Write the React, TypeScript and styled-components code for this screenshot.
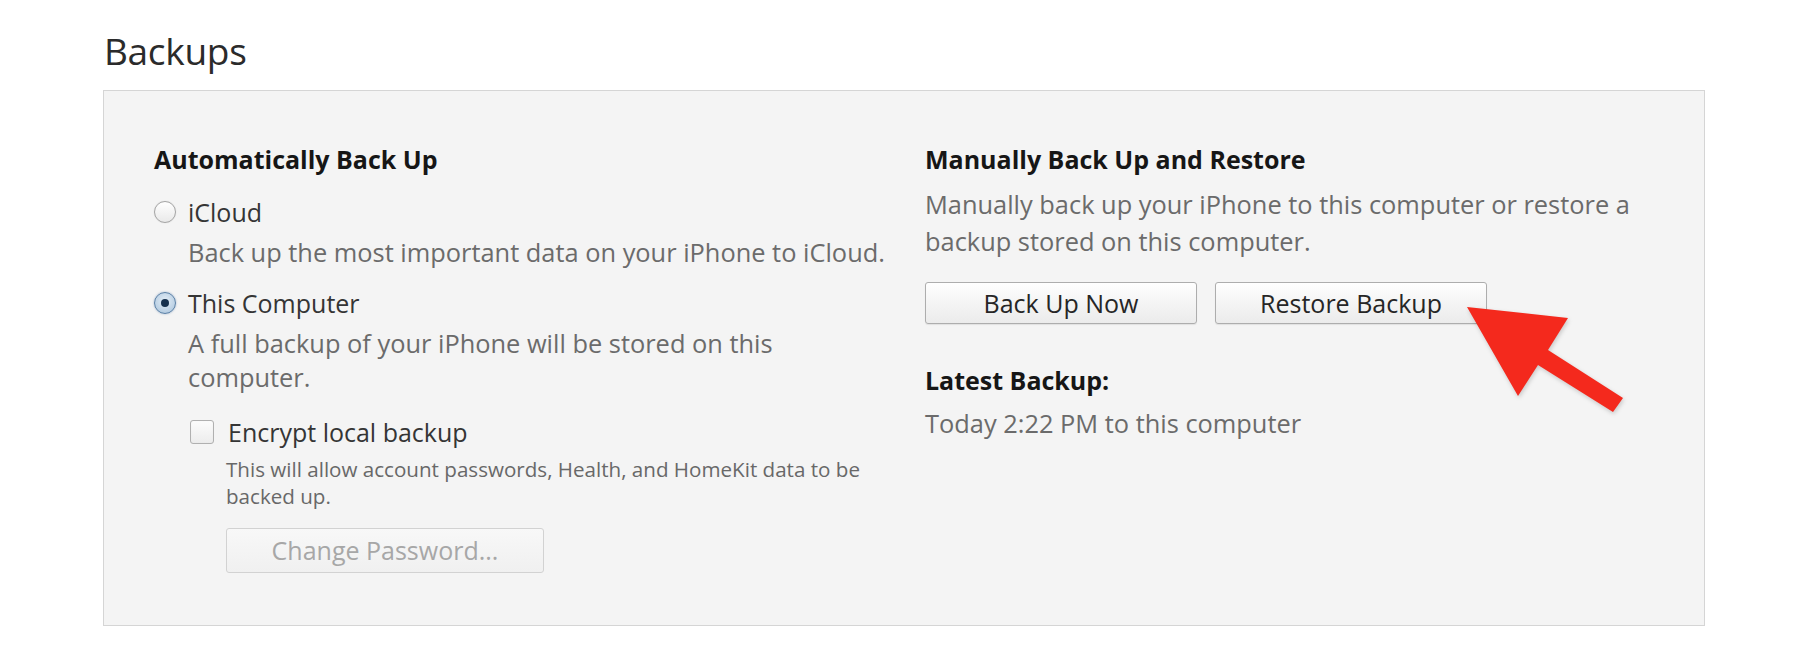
import styled, { createGlobalStyle } from 'styled-components'

const GlobalStyle = createGlobalStyle`
  html, body {
    margin: 0;
    padding: 0;
    background: #ffffff;
  }
  body {
    font-family: 'Open Sans', 'Noto Sans', sans-serif;
  }
`

export default function App() {
  return (
    <Page>
      <GlobalStyle />
      <Title>Backups</Title>
      <Panel>
        <Column>
          <Heading>Automatically Back Up</Heading>
          <OptionRow $top={21}>
            <Radio $checked={false} />
            <Label>iCloud</Label>
          </OptionRow>
          <Description $top={8} $lineHeight={33} $indent={34}>
            Back up the most important data on your iPhone to iCloud.
          </Description>
          <OptionRow $top={18}>
            <Radio $checked />
            <Label>This Computer</Label>
          </OptionRow>
          <Description $top={8} $lineHeight={33.5} $indent={34}>
            A full backup of your iPhone will be stored on this
            <br />
            computer.
          </Description>
          <CheckRow>
            <Checkbox />
            <Label>Encrypt local backup</Label>
          </CheckRow>
          <Nested>
            <SmallText>
              This will allow account passwords, Health, and HomeKit data to be
              <br />
              backed up.
            </SmallText>
            <PasswordButton disabled>Change Password...</PasswordButton>
          </Nested>
        </Column>
        <Column>
          <Heading>Manually Back Up and Restore</Heading>
          <Description $top={11} $lineHeight={36.5} $indent={0}>
            Manually back up your iPhone to this computer or restore a
            <br />
            backup stored on this computer.
          </Description>
          <ButtonRow>
            <Button>Back Up Now</Button>
            <Button>Restore Backup</Button>
          </ButtonRow>
          <Heading $top={40}>Latest Backup:</Heading>
          <Description $top={11} $lineHeight={32} $indent={0}>
            Today 2:22 PM to this computer
          </Description>
        </Column>
        <Arrow viewBox="0 0 180 125" width={180} height={125}>
          <polygon
            points="12,12 113,23 93,55 168,103 158,117 83,70 63,101"
            fill="#f4291d"
          />
        </Arrow>
      </Panel>
    </Page>
  )
}

const Page = styled.div`
  padding: 26px 0 40px 103px;
`

const Title = styled.h1`
  margin: 0 0 14px 1px;
  font-size: 37px;
  font-weight: 400;
  letter-spacing: -0.3px;
  line-height: 50px;
  color: #2b2b2b;
`

const Panel = styled.div`
  position: relative;
  box-sizing: border-box;
  width: 1602px;
  background: #f4f4f4;
  border: 1px solid #d5d5d5;
  padding: 52px 0 52px 50px;
  display: grid;
  grid-template-columns: 771px 1fr;
`

const Column = styled.div`
  display: flex;
  flex-direction: column;
  align-items: flex-start;
`

const Heading = styled.div<{ $top?: number }>`
  margin-top: ${({ $top }) => $top ?? 0}px;
  font-size: 25px;
  font-weight: 700;
  line-height: 32px;
  color: #161616;
`

const OptionRow = styled.div<{ $top: number }>`
  display: flex;
  align-items: center;
  gap: 12px;
  margin: ${({ $top }) => $top}px 0 0 0;
  height: 32px;
`

const Label = styled.span`
  font-size: 25px;
  line-height: 32px;
  color: #353535;
`

const Radio = styled.span<{ $checked: boolean }>`
  position: relative;
  flex: 0 0 auto;
  box-sizing: border-box;
  width: 22px;
  height: 22px;
  border-radius: 50%;
  border: 1px solid ${({ $checked }) => ($checked ? '#5a80a6' : '#a4a4a4')};
  background: ${({ $checked }) =>
    $checked
      ? 'radial-gradient(circle at 50% 40%, #e4eef7 0%, #b9cfe3 70%, #9bb7d3 100%)'
      : 'linear-gradient(#ffffff, #e9e9e9)'};
  box-shadow: ${({ $checked }) =>
    $checked ? '0 0 2px rgba(80, 120, 170, 0.55)' : '0 0 1px rgba(0, 0, 0, 0.18)'};

  &::after {
    content: '';
    display: ${({ $checked }) => ($checked ? 'block' : 'none')};
    position: absolute;
    left: 6px;
    top: 6px;
    width: 8px;
    height: 8px;
    border-radius: 50%;
    background: #16304d;
  }
`

const Description = styled.div<{ $top: number; $lineHeight: number; $indent: number }>`
  margin: ${({ $top }) => $top}px 0 0 ${({ $indent }) => $indent}px;
  font-size: 25.4px;
  line-height: ${({ $lineHeight }) => $lineHeight}px;
  color: #6b6b6b;
  white-space: nowrap;
`

const CheckRow = styled.div`
  display: flex;
  align-items: center;
  gap: 14px;
  margin: 22px 0 0 36px;
  height: 32px;
`

const Checkbox = styled.span`
  flex: 0 0 auto;
  box-sizing: border-box;
  width: 24px;
  height: 24px;
  border: 1px solid #b0b0b0;
  border-radius: 3px;
  background: linear-gradient(#fcfcfc, #ececec);
  box-shadow: inset 0 0 1px rgba(0, 0, 0, 0.08);
`

const Nested = styled.div`
  display: flex;
  flex-direction: column;
  align-items: flex-start;
  margin: 8px 0 0 72px;
`

const SmallText = styled.div`
  font-size: 20.6px;
  line-height: 27px;
  color: #686868;
  white-space: nowrap;
`

const Button = styled.button`
  box-sizing: border-box;
  width: 272px;
  height: 42px;
  padding: 0;
  border: 1px solid #adadad;
  border-radius: 3px;
  background: linear-gradient(#fefefe, #ebebeb);
  box-shadow: 0 1px 1px rgba(0, 0, 0, 0.08);
  font-family: 'Open Sans', 'Noto Sans', sans-serif;
  font-size: 25px;
  line-height: 40px;
  color: #262626;
`

const PasswordButton = styled(Button)`
  width: 318px;
  height: 45px;
  margin-top: 18px;
  border-color: #d2d2d2;
  background: linear-gradient(#f8f8f8, #f0f0f0);
  box-shadow: none;
  color: #a7a7a7;
  line-height: 43px;
`

const ButtonRow = styled.div`
  display: flex;
  gap: 18px;
  margin-top: 23px;
`

const Arrow = styled.svg`
  position: absolute;
  left: 1351px;
  top: 204px;
  filter: drop-shadow(1px 2px 2px rgba(0, 0, 0, 0.18));
`
